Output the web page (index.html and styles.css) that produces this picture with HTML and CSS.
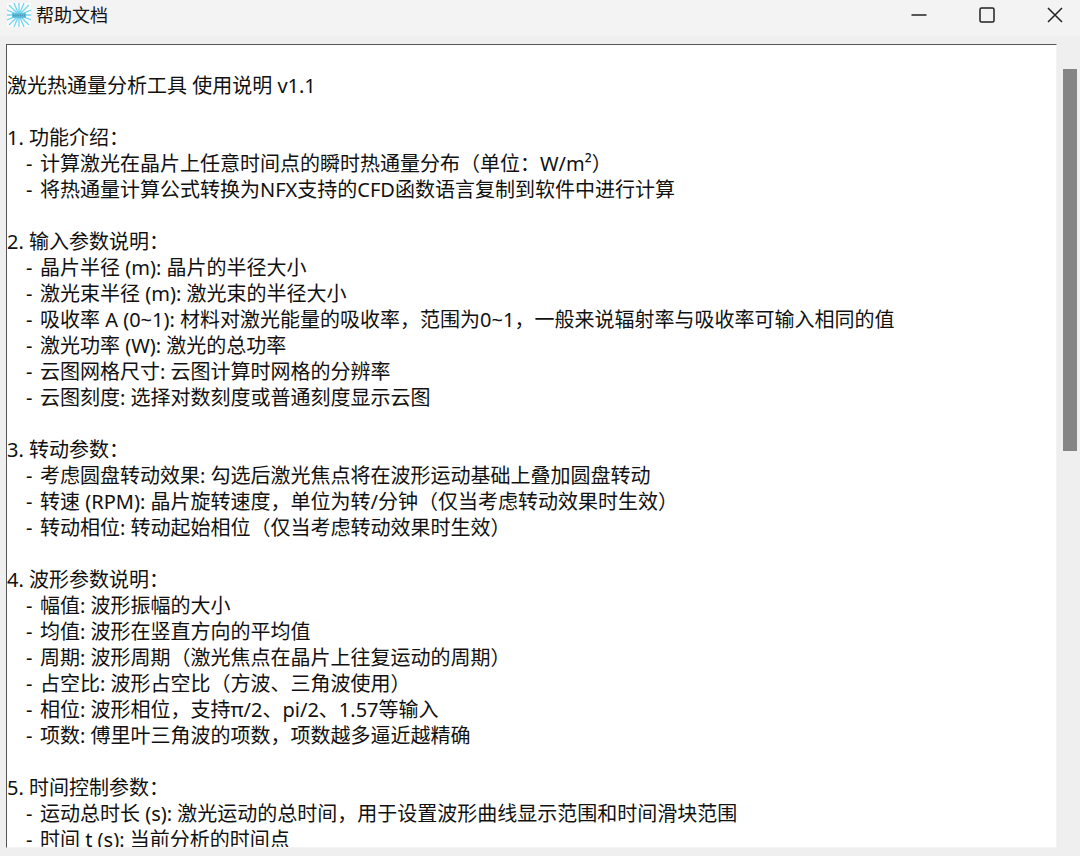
FILE: index.html
```
<!DOCTYPE html>
<html lang="zh-CN">
<head>
    <meta charset="UTF-8">
    <meta name="viewport" content="width=device-width, initial-scale=1.0">
    <title>帮助文档</title>
    <link rel="stylesheet" href="styles.css">
</head>
<body>
    <!-- Title Bar -->
    <header class="titlebar">
        <svg class="app-icon" viewBox="0 0 24 24" aria-hidden="true">
            <rect width="24" height="24" fill="#fafdfe"/>
            <g stroke="#74d4f0" stroke-width="1.3">
                <path d="M12 0V24M0 12H24M2 2L22 22M22 2L2 22"/>
                <path d="M7 0L17 24M17 0L7 24M0 7L24 17M24 7L0 17"/>
            </g>
            <circle cx="12" cy="12" r="4" fill="#74d4f0"/>
            <rect x="5" y="10" width="14" height="5" fill="#62c3e0"/>
            <path d="M6 12.5H18" stroke="#4f9ab4" stroke-width="2" stroke-dasharray="1.5 0.7"/>
        </svg>
        <span class="title">帮助文档</span>
        <div class="window-buttons">
            <button type="button" aria-label="最小化">
                <svg viewBox="0 0 16 16"><path d="M0.5 8H15.5"/></svg>
            </button>
            <button type="button" aria-label="最大化">
                <svg viewBox="0 0 16 16"><rect x="1" y="1" width="14" height="14" rx="1.5"/></svg>
            </button>
            <button type="button" aria-label="关闭">
                <svg viewBox="0 0 16 16"><path d="M1 1L15 15M15 1L1 15"/></svg>
            </button>
        </div>
    </header>

    <!-- Help Text -->
    <main class="viewer">
        <article class="document">
            <h1>激光热通量分析工具 使用说明 v1.1</h1>

            <h2>1. 功能介绍：</h2>
            <ul>
                <li><span>-</span>计算激光在晶片上任意时间点的瞬时热通量分布（单位：W/m²）</li>
                <li><span>-</span>将热通量计算公式转换为NFX支持的CFD函数语言复制到软件中进行计算</li>
            </ul>

            <h2>2. 输入参数说明：</h2>
            <ul>
                <li><span>-</span>晶片半径 (m): 晶片的半径大小</li>
                <li><span>-</span>激光束半径 (m): 激光束的半径大小</li>
                <li><span>-</span>吸收率 A (0~1): 材料对激光能量的吸收率，范围为0~1，一般来说辐射率与吸收率可输入相同的值</li>
                <li><span>-</span>激光功率 (W): 激光的总功率</li>
                <li><span>-</span>云图网格尺寸: 云图计算时网格的分辨率</li>
                <li><span>-</span>云图刻度: 选择对数刻度或普通刻度显示云图</li>
            </ul>

            <h2>3. 转动参数：</h2>
            <ul>
                <li><span>-</span>考虑圆盘转动效果: 勾选后激光焦点将在波形运动基础上叠加圆盘转动</li>
                <li><span>-</span>转速 (RPM): 晶片旋转速度，单位为转/分钟（仅当考虑转动效果时生效）</li>
                <li><span>-</span>转动相位: 转动起始相位（仅当考虑转动效果时生效）</li>
            </ul>

            <h2>4. 波形参数说明：</h2>
            <ul>
                <li><span>-</span>幅值: 波形振幅的大小</li>
                <li><span>-</span>均值: 波形在竖直方向的平均值</li>
                <li><span>-</span>周期: 波形周期（激光焦点在晶片上往复运动的周期）</li>
                <li><span>-</span>占空比: 波形占空比（方波、三角波使用）</li>
                <li><span>-</span>相位: 波形相位，支持π/2、pi/2、1.57等输入</li>
                <li><span>-</span>项数: 傅里叶三角波的项数，项数越多逼近越精确</li>
            </ul>

            <h2>5. 时间控制参数：</h2>
            <ul>
                <li><span>-</span>运动总时长 (s): 激光运动的总时间，用于设置波形曲线显示范围和时间滑块范围</li>
                <li><span>-</span>时间 t (s): 当前分析的时间点</li>
            </ul>
        </article>
        <div class="scrollbar">
            <div class="thumb"></div>
        </div>
    </main>
</body>
</html>
```

FILE: styles.css
```
/* Basic Reset */
* {
    box-sizing: border-box;
    margin: 0;
    padding: 0;
}

/* Window */
body {
    display: flex;
    flex-direction: column;
    height: 100vh;
    overflow: hidden;
    background-color: #efefef;
    color: #111;
    font-family: "Noto Sans", "Noto Sans CJK SC", sans-serif;
    font-size: 20px;
    line-height: 26px;
}

/* Title Bar */
.titlebar {
    display: flex;
    flex-shrink: 0;
    align-items: center;
    height: 36px;
    padding: 0 7px 6px 7px;
    background-color: #f3f3f3;
}

.app-icon {
    width: 24px;
    height: 24px;
    margin-right: 5px;
}

.title {
    font-size: 18px;
}

.window-buttons {
    display: flex;
    gap: 32px;
    margin-left: auto;
}

.window-buttons button {
    display: flex;
    align-items: center;
    justify-content: center;
    width: 36px;
    height: 30px;
    border: none;
    background: none;
}

.window-buttons svg {
    width: 16px;
    height: 16px;
    fill: none;
    stroke: #222;
    stroke-width: 1.5;
}

/* Text Area with Scrollbar */
.viewer {
    display: flex;
    flex: 1;
    min-height: 0;
    padding: 8px 3px 8px 6px;
}

.document {
    flex: 1;
    padding-top: 28px;
    overflow: hidden;
    background-color: #fff;
    border: 1px solid #f3f3f3;
    border-top-color: #555;
    border-left-color: #555;
}

.document h1,
.document h2 {
    font-size: 20px;
    font-weight: normal;
}

.document h2 {
    margin-top: 26px;
}

.document ul {
    padding-left: 19px;
    list-style: none;
}

.document li span {
    display: inline-block;
    width: 14px;
}

.scrollbar {
    width: 14px;
    margin-left: 6px;
    padding-top: 25px;
}

.thumb {
    height: 49%;
    background-color: #858585;
}
```
